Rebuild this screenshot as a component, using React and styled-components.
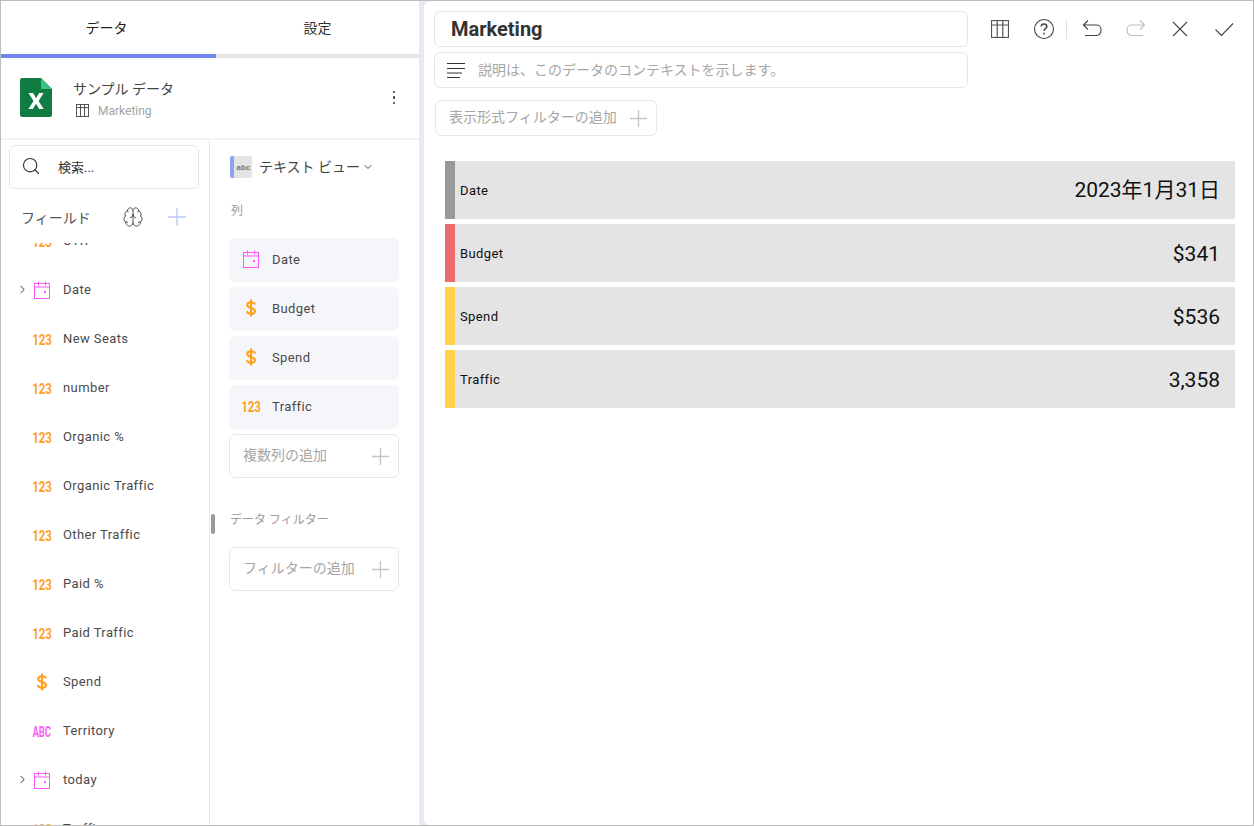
import React from 'react'
import styled, { createGlobalStyle } from 'styled-components'
import { Brain, ChevronDown, ChevronRight, Search } from 'lucide-react'

const GlobalStyle = createGlobalStyle`
  * { box-sizing: border-box; }
  html, body {
    margin: 0;
    padding: 0;
    background: #e8eaf3;
    font-family: Roboto, "Noto Sans CJK JP", sans-serif;
  }
`

const fields = [
  { name: 'CTR', type: 'num' },
  { name: 'Date', type: 'date', expand: true },
  { name: 'New Seats', type: 'num' },
  { name: 'number', type: 'num' },
  { name: 'Organic %', type: 'num' },
  { name: 'Organic Traffic', type: 'num' },
  { name: 'Other Traffic', type: 'num' },
  { name: 'Paid %', type: 'num' },
  { name: 'Paid Traffic', type: 'num' },
  { name: 'Spend', type: 'money' },
  { name: 'Territory', type: 'abc' },
  { name: 'today', type: 'date', expand: true },
  { name: 'Traffic', type: 'num' },
]

const columns = [
  { name: 'Date', type: 'date' },
  { name: 'Budget', type: 'money' },
  { name: 'Spend', type: 'money' },
  { name: 'Traffic', type: 'num' },
]

const cards = [
  { label: 'Date', value: '2023年1月31日', color: '#999999', cjk: true },
  { label: 'Budget', value: '$341', color: '#ee6a6a' },
  { label: 'Spend', value: '$536', color: '#ffd24d' },
  { label: 'Traffic', value: '3,358', color: '#ffd24d' },
]

function CalendarIcon() {
  return (
    <svg width="18" height="18" viewBox="0 0 18 18" fill="none" stroke="#ff55fb" strokeWidth="1">
      <rect x="1.5" y="2.5" width="15" height="15" />
      <path d="M1.5 6h15M5.5 0.5v4M12.5 0.5v4" />
      <rect x="11" y="10" width="2" height="2" fill="#ff55fb" stroke="none" />
    </svg>
  )
}

function DollarIcon() {
  return (
    <svg width="12" height="18" viewBox="0 0 12 18" fill="none" stroke="#ffa01e" strokeWidth="2.1">
      <path d="M10 5.6C9.6 4 8.2 3.2 6 3.2 3.6 3.2 2.2 4.3 2.2 6c0 3.8 7.8 2.2 7.8 6.1 0 1.7-1.6 2.8-4 2.8-2.3 0-3.8-.9-4.1-2.7" />
      <path d="M6 0.5v17" />
    </svg>
  )
}

function TypeIcon({ type }) {
  if (type === 'date') return <CalendarIcon />
  if (type === 'money') return <DollarIcon />
  if (type === 'abc') return <AbcGlyph>ABC</AbcGlyph>
  return <NumGlyph>123</NumGlyph>
}

function GridIcon({ size = 18, color = '#444' }) {
  return (
    <svg width={size} height={size} viewBox="0 0 18 18" fill="none" stroke={color} strokeWidth="1.2">
      <rect x="0.5" y="0.5" width="17" height="17" />
      <path d="M0.5 5h17M6.2 0.5v17M11.8 0.5v17" />
    </svg>
  )
}

function PlusIcon({ color = '#c4c4c4', size = 17 }) {
  return (
    <svg width={size} height={size} viewBox="0 0 17 17" stroke={color} strokeWidth="1.3">
      <path d="M8.5 0v17M0 8.5h17" />
    </svg>
  )
}

function ToolIcon({ children }) {
  return (
    <svg width="24" height="24" viewBox="0 0 24 24" fill="none" stroke="#444" strokeWidth="1.1">
      {children}
    </svg>
  )
}

export default function App() {
  return (
    <Page>
      <GlobalStyle />
      <LeftPanel>
        <Tabs>
          <Tab $active>データ</Tab>
          <Tab>設定</Tab>
        </Tabs>
        <SourceHeader>
          <svg width="32" height="39" viewBox="0 0 32 39">
            <path d="M2 0h19l11 11v26a2 2 0 0 1-2 2H2a2 2 0 0 1-2-2V2a2 2 0 0 1 2-2z" fill="#107c41" />
            <path d="M21 0l11 11H21z" fill="#33c481" />
            <path d="M8.5 15h4.6l3 5.2 3.1-5.2h4.4l-5 8 5.1 8h-4.6l-3.1-5.2-3.1 5.2H8.4l5.1-8z" fill="#fff" />
          </svg>
          <SourceText>
            <SourceName>サンプル データ</SourceName>
            <SourceSheet>
              <GridIcon size={13} color="#333" />
              <span>Marketing</span>
            </SourceSheet>
          </SourceText>
          <MoreButton>
            <i />
            <i />
            <i />
          </MoreButton>
        </SourceHeader>
        <Columns>
          <FieldsColumn>
            <SearchBox>
              <Search size={20} color="#333" strokeWidth={1.4} />
              <span>検索...</span>
            </SearchBox>
            <FieldsHeader>
              <FieldsTitle>フィールド</FieldsTitle>
              <Brain size={22} color="#444" strokeWidth={1} />
              <PlusIcon color="#bccaf8" size={18} />
            </FieldsHeader>
            <FieldList>
              <FieldScroll>
                {fields.map((f) => (
                  <FieldRow key={f.name}>
                    <Expander>{f.expand && <ChevronRight size={13} color="#333" strokeWidth={1.8} />}</Expander>
                    <IconSlot>
                      <TypeIcon type={f.type} />
                    </IconSlot>
                    <RowLabel>{f.name}</RowLabel>
                  </FieldRow>
                ))}
              </FieldScroll>
            </FieldList>
            <Splitter />
          </FieldsColumn>
          <SettingsColumn>
            <ViewPicker>
              <ViewBadge>abc</ViewBadge>
              <ViewName>テキスト ビュー</ViewName>
              <ChevronDown size={12} color="#333" strokeWidth={1.8} />
            </ViewPicker>
            <SectionLabel>列</SectionLabel>
            <ColumnStack>
              {columns.map((c) => (
                <ColumnChip key={c.name}>
                  <IconSlot>
                    <TypeIcon type={c.type} />
                  </IconSlot>
                  <RowLabel>{c.name}</RowLabel>
                </ColumnChip>
              ))}
              <AddBox>
                <AddText>複数列の追加</AddText>
                <PlusIcon />
              </AddBox>
            </ColumnStack>
            <FilterLabel>データ フィルター</FilterLabel>
            <AddBox>
              <AddText>フィルターの追加</AddText>
              <PlusIcon />
            </AddBox>
          </SettingsColumn>
        </Columns>
      </LeftPanel>
      <RightPanel>
        <TopBar>
          <TitleStack>
            <TitleInput>Marketing</TitleInput>
            <DescInput>
              <svg width="18" height="16" viewBox="0 0 18 16" stroke="#333" strokeWidth="1">
                <path d="M0 1.5h18M0 6.5h18M0 11h15M0 15.5h13" />
              </svg>
              <DescText>説明は、このデータのコンテキストを示します。</DescText>
            </DescInput>
          </TitleStack>
          <Toolbar>
            <ToolButton>
              <GridIcon size={18} color="#555" />
            </ToolButton>
            <ToolButton>
              <ToolIcon>
                <circle cx="12" cy="12" r="9.5" />
                <path d="M9.2 9.6c0-1.6 1.2-2.6 2.8-2.6s2.8 1 2.8 2.4c0 2.4-2.8 2.2-2.8 4.6" strokeWidth="1.5" />
                <path d="M12 15.8v1.8" strokeWidth="1.6" />
              </ToolIcon>
            </ToolButton>
            <ToolDivider />
            <ToolButton>
              <ToolIcon>
                <path d="M8 3.5L3.5 8 8 12.5M3.5 8h13a4.5 4.5 0 0 1 4.5 4.5v1a5 5 0 0 1-5 5H5" />
              </ToolIcon>
            </ToolButton>
            <ToolButton>
              <svg width="24" height="24" viewBox="0 0 24 24" fill="none" stroke="#bdbdbd" strokeWidth="1.1">
                <path d="M16 3.5L20.5 8 16 12.5M20.5 8h-13A4.5 4.5 0 0 0 3 12.5v1a5 5 0 0 0 5 5h11" />
              </svg>
            </ToolButton>
            <ToolButton>
              <ToolIcon>
                <path d="M5 5l14 14M19 5L5 19" />
              </ToolIcon>
            </ToolButton>
            <ToolButton>
              <ToolIcon>
                <path d="M3.5 12.5l6 6L21 6.5" />
              </ToolIcon>
            </ToolButton>
          </Toolbar>
        </TopBar>
        <FilterButton>
          <AddText>表示形式フィルターの追加</AddText>
          <PlusIcon />
        </FilterButton>
        <CardList>
          {cards.map((c) => (
            <Card key={c.label} $accent={c.color}>
              <CardLabel>{c.label}</CardLabel>
              <CardValue $cjk={c.cjk}>{c.value}</CardValue>
            </Card>
          ))}
        </CardList>
      </RightPanel>
    </Page>
  )
}

const Page = styled.div`
  width: 1254px;
  height: 826px;
  display: flex;
  gap: 5px;
  background: #e8eaf3;
  border: 1px solid #bdbdbd;
  overflow: hidden;
`

const LeftPanel = styled.div`
  width: 418px;
  flex: none;
  display: flex;
  flex-direction: column;
  background: #fff;
`

const Tabs = styled.div`
  display: flex;
  height: 57px;
  flex: none;
`

const Tab = styled.div`
  width: ${(p) => (p.$active ? '215px' : '203px')};
  display: flex;
  align-items: center;
  justify-content: center;
  padding-right: ${(p) => (p.$active ? '4px' : '0')};
  padding-bottom: 2px;
  font-size: 14px;
  color: ${(p) => (p.$active ? '#222' : '#333')};
  border-bottom: 4px solid ${(p) => (p.$active ? '#6f87ef' : '#e6e6e6')};
`

const SourceHeader = styled.div`
  height: 82px;
  flex: none;
  display: flex;
  align-items: center;
  padding: 1px 24px 2px 19px;
  border-bottom: 2px solid #f3f3f5;
`

const SourceText = styled.div`
  flex: 1;
  margin-left: 21px;
  padding-top: 1px;
  display: flex;
  flex-direction: column;
  gap: 5px;
`

const SourceName = styled.div`
  font-size: 14px;
  color: #444;
  line-height: 20px;
`

const SourceSheet = styled.div`
  display: flex;
  align-items: center;
  gap: 9px;
  margin-left: 3px;
  font-size: 12px;
  color: #a3a3a3;
`

const MoreButton = styled.div`
  display: flex;
  flex-direction: column;
  gap: 3px;

  i {
    display: block;
    width: 2.5px;
    height: 2.5px;
    background: #333;
    border-radius: 50%;
  }
`

const Columns = styled.div`
  flex: 1;
  min-height: 0;
  display: flex;
`

const FieldsColumn = styled.div`
  position: relative;
  width: 209px;
  flex: none;
  display: flex;
  flex-direction: column;
  border-right: 1px solid #e8e8e8;
`

const SearchBox = styled.div`
  margin: 5px 10px 0 8px;
  height: 44px;
  flex: none;
  display: flex;
  align-items: center;
  gap: 17px;
  padding: 0 11px 2px;
  border: 1px solid #e6e6e9;
  border-radius: 6px;
  font-size: 13px;
  color: #333;
`

const FieldsHeader = styled.div`
  height: 54px;
  flex: none;
  display: flex;
  align-items: center;
  padding: 1px 23px 0 20px;

  svg:first-of-type {
    margin-right: 24px;
  }
`

const FieldsTitle = styled.div`
  flex: 1;
  font-size: 14px;
  color: #555;
`

const FieldList = styled.div`
  flex: 1;
  min-height: 0;
  overflow: hidden;
`

const FieldScroll = styled.div`
  margin-top: -27px;
`

const FieldRow = styled.div`
  height: 49px;
  display: flex;
  align-items: center;
  padding-left: 15px;
`

const Expander = styled.div`
  width: 13px;
  display: flex;
  align-items: center;
`

const IconSlot = styled.div`
  width: 26px;
  margin-right: 8px;
  display: flex;
  align-items: center;
  justify-content: center;
`

const RowLabel = styled.div`
  font-size: 13px;
  letter-spacing: 0.4px;
  color: #4a4a4a;
`

const NumGlyph = styled.span`
  display: inline-block;
  margin-top: 2px;
  font-size: 14px;
  font-weight: 700;
  color: #ffa01e;
  transform: scaleX(0.82);
`

const AbcGlyph = styled.span`
  display: inline-block;
  margin-top: 2px;
  font-size: 14px;
  font-weight: 700;
  color: #fb5ff5;
  transform: scaleX(0.68);
`

const Splitter = styled.div`
  position: absolute;
  right: -6px;
  top: 374px;
  width: 4px;
  height: 20px;
  background: #999;
  border-radius: 2px;
`

const SettingsColumn = styled.div`
  flex: 1;
  display: flex;
  flex-direction: column;
  padding: 16px 20px 0 19px;
`

const ViewPicker = styled.div`
  display: flex;
  align-items: center;
  height: 22px;
  margin-left: 1px;
`

const ViewBadge = styled.div`
  width: 22px;
  height: 22px;
  margin-right: 7px;
  display: flex;
  align-items: center;
  justify-content: center;
  padding-left: 1px;
  background: #e4e4e4;
  border-left: 4px solid #8fa3f2;
  border-radius: 2px;
  font-family: "Liberation Sans", sans-serif;
  font-size: 8px;
  font-weight: 700;
  color: #777;
`

const ViewName = styled.div`
  font-size: 14px;
  color: #444;
  margin-right: 2px;
  padding-bottom: 3px;
`

const SectionLabel = styled.div`
  margin: 24px 0 0 2px;
  height: 18px;
  font-size: 12px;
  line-height: 18px;
  color: #9a9a9a;
`

const ColumnStack = styled.div`
  margin-top: 18px;
  display: flex;
  flex-direction: column;
  gap: 5px;
`

const ColumnChip = styled.div`
  height: 44px;
  display: flex;
  align-items: center;
  padding: 0 0 2px 9px;
  background: #f5f6fa;
  border-radius: 6px;
`

const AddBox = styled.div`
  height: 44px;
  display: flex;
  align-items: center;
  justify-content: space-between;
  padding: 0 9px 0 13px;
  border: 1px solid #e8e8ea;
  border-radius: 6px;
  font-size: 14px;
`

const AddText = styled.span`
  padding-bottom: 5px;
  color: #a6a6a6;
`

const DescText = styled.span`
  padding-bottom: 3px;
  color: #a6a6a6;
`

const FilterLabel = styled.div`
  margin: 33px 0 18px 1px;
  height: 18px;
  font-size: 12px;
  line-height: 18px;
  color: #9a9a9a;
`

const RightPanel = styled.div`
  flex: 1;
  min-width: 0;
  display: flex;
  flex-direction: column;
  background: #fff;
  border-top-left-radius: 6px;
  border-bottom-left-radius: 6px;
  padding: 10px 18px 0 10px;
`

const TopBar = styled.div`
  display: flex;
  align-items: flex-start;
`

const TitleStack = styled.div`
  width: 534px;
  flex: none;
  display: flex;
  flex-direction: column;
  gap: 5px;
`

const TitleInput = styled.div`
  height: 36px;
  display: flex;
  align-items: center;
  padding: 0 16px;
  border: 1px solid #e6e6e9;
  border-radius: 6px;
  font-size: 20px;
  font-weight: 700;
  color: #333;
`

const DescInput = styled.div`
  height: 36px;
  display: flex;
  align-items: center;
  gap: 13px;
  padding: 0 12px;
  border: 1px solid #e6e6e9;
  border-radius: 6px;
  font-size: 14px;
`

const Toolbar = styled.div`
  margin-left: 20px;
  height: 36px;
  display: flex;
  align-items: center;
`

const ToolButton = styled.div`
  width: 24px;
  height: 24px;
  display: flex;
  align-items: center;
  justify-content: center;
  margin-right: 20px;

  &:last-child {
    margin-right: 0;
  }
`

const ToolDivider = styled.div`
  width: 1px;
  height: 20px;
  background: #e0e0e0;
  margin: 0 13px 0 -10px;
`

const FilterButton = styled.div`
  margin: 12px 0 0 1px;
  width: 222px;
  height: 36px;
  display: flex;
  align-items: center;
  justify-content: space-between;
  padding: 0 9px 0 13px;
  border: 1px solid #e8e8ea;
  border-radius: 6px;
  font-size: 14px;
`

const CardList = styled.div`
  margin: 25px 0 0 11px;
  display: flex;
  flex-direction: column;
  gap: 5px;
`

const Card = styled.div`
  height: 58px;
  display: flex;
  align-items: center;
  justify-content: space-between;
  padding: 0 15px 0 5px;
  background: #e4e4e4;
  border-left: 10px solid ${(p) => p.$accent};
`

const CardLabel = styled.div`
  font-size: 13px;
  letter-spacing: 0.4px;
  color: #111;
`

const CardValue = styled.div`
  font-size: 21px;
  line-height: 24px;
  margin-top: ${(p) => (p.$cjk ? '0' : '2px')};
  color: #111;
`
